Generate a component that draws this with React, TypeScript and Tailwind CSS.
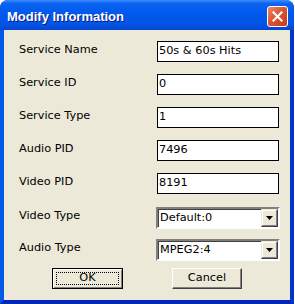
import React from "react";

const fieldFont = { fontFamily: '"DejaVu Sans", Tahoma, sans-serif' };

function TextRow({ label, value, first }: { label: string; value: string; first?: boolean }) {
  return (
    <div className={`flex items-start ${first ? "" : "mt-[12px]"}`}>
      <span className="w-[138px] shrink-0 text-[11.3px] leading-[17px] text-black">{label}</span>
      <div className="flex h-[21px] w-[122px] items-center border border-black bg-white pl-[1px] text-[11.3px] text-black">
        {value}
      </div>
    </div>
  );
}

function SelectRow({ label, value, mt }: { label: string; value: string; mt: string }) {
  return (
    <div className={`flex items-start ${mt}`}>
      <span className="w-[137px] shrink-0 text-[11.3px] leading-[17px] text-black">{label}</span>
      <div className="flex h-[22px] w-[124px] border-2 border-l-[#808080] border-t-[#808080] border-b-white border-r-white bg-white shadow-[inset_1px_1px_0_#404040]">
        <div className="flex flex-1 items-center pl-[2px] text-[11.3px] text-black">{value}</div>
        <div className="flex w-[17px] items-center justify-center border border-l-[#ece9d8] border-t-[#ece9d8] border-b-[#404040] border-r-[#404040] bg-[#ece9d8] shadow-[inset_-1px_-1px_0_#808080,inset_1px_1px_0_#fff]">
          <svg width="7" height="4" viewBox="0 0 7 4">
            <path d="M0 0h7L3.5 4z" fill="#000" />
          </svg>
        </div>
      </div>
    </div>
  );
}

export default function App() {
  return (
    <div className="h-[304px] w-[295px] overflow-hidden bg-white" style={fieldFont}>
      <div className="flex h-[304px] w-[294px] flex-col overflow-hidden rounded-t-[8px] bg-[#0346d8]">
        <div className="flex h-[30px] shrink-0 items-center justify-between bg-[linear-gradient(to_bottom,#3d8dff_0%,#0b63f0_12%,#0058ee_45%,#0355e6_80%,#0445d0_100%)] pl-[7px] pr-[6px] pt-[3px]">
          <span
            className="text-[13px] font-bold text-white [text-shadow:1px_1px_0_#0a1a80]"
            style={{ fontFamily: '"Liberation Sans", Arial, sans-serif' }}
          >
            Modify Information
          </span>
          <div className="flex h-[21px] w-[21px] items-center justify-center rounded-[3px] border border-white bg-[linear-gradient(135deg,#ec8b6c_0%,#dc5433_45%,#c63a17_100%)]">
            <svg width="11" height="11" viewBox="0 0 11 11">
              <path d="M1.5 1.5l8 8M9.5 1.5l-8 8" stroke="#fff" strokeWidth="2.2" strokeLinecap="square" />
            </svg>
          </div>
        </div>
        <div className="flex flex-1 border-b-[4px] border-l-[4px] border-r-[4px] border-b-[#0028b8] border-l-[#0458e8] border-r-[#0335c8]">
          <div className="flex flex-1 flex-col bg-[#ece9d8] pl-[15px] pt-[11px]">
            <TextRow label="Service Name" value="50s & 60s Hits" first />
            <TextRow label="Service ID" value="0" />
            <TextRow label="Service Type" value="1" />
            <TextRow label="Audio PID" value="7496" />
            <TextRow label="Video PID" value="8191" />
            <SelectRow label="Video Type" value="Default:0" mt="mt-[13px]" />
            <SelectRow label="Audio Type" value="MPEG2:4" mt="mt-[10px]" />
            <div className="mt-[7px] flex">
              <button
                type="button"
                className="ml-[33px] flex h-[21px] w-[71px] items-center justify-center border border-black bg-[#ece9d8] p-[3px] text-[11.3px] text-black shadow-[inset_1px_1px_0_#fff,inset_-1px_-1px_0_#808080]"
              >
                <span className="flex h-full w-full items-center justify-center border border-dotted border-black">OK</span>
              </button>
              <button
                type="button"
                className="ml-[49px] flex h-[21px] w-[70px] items-center justify-center border border-l-white border-t-white border-b-[#404040] border-r-[#404040] bg-[#ece9d8] text-[11.3px] text-black shadow-[inset_-1px_-1px_0_#808080]"
              >
                Cancel
              </button>
            </div>
          </div>
        </div>
      </div>
    </div>
  );
}
